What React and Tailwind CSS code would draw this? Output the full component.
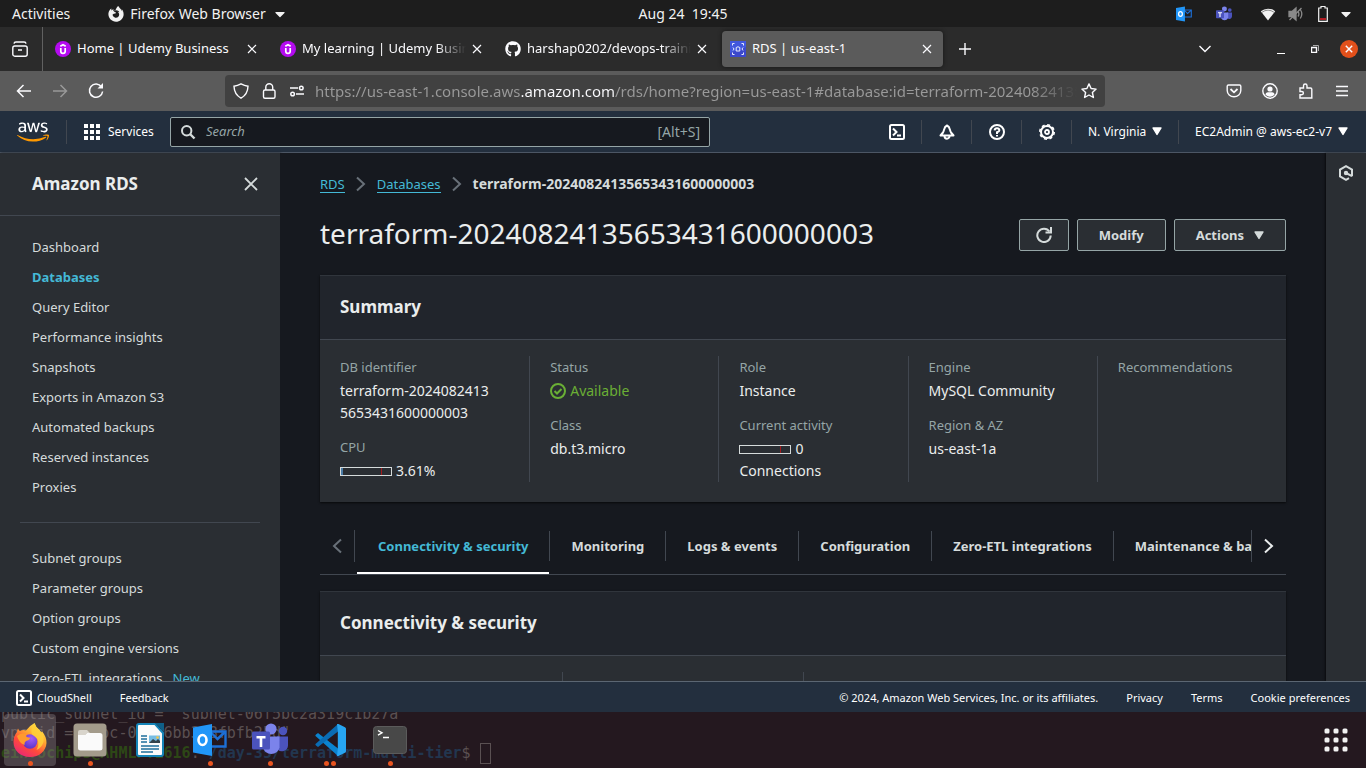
import React from "react";
import {
  FaAws,
  FaGithub,
  FaFirefoxBrowser,
  FaCaretDown,
} from "react-icons/fa";

function Stroke({ size = 16, w = 1.5, children, className = "", box = 16 }) {
  return (
    <svg
      width={size}
      height={size}
      viewBox={`0 0 ${box} ${box}`}
      fill="none"
      stroke="currentColor"
      strokeWidth={w}
      className={"shrink-0 " + className}
      aria-hidden="true"
    >
      {children}
    </svg>
  );
}

function Caret({ className = "" }) {
  return (
    <svg width="10" height="9" viewBox="0 0 10 9" className={"shrink-0 " + className} aria-hidden="true">
      <path d="M1 1h8L5 7.5Z" fill="currentColor" stroke="currentColor" strokeWidth="1.4" strokeLinejoin="round" />
    </svg>
  );
}

function CloudShellIcon() {
  return (
    <Stroke w={2}>
      <rect x="1" y="1" width="14" height="14" rx="1.5" />
      <path d="M4 4.5 7.5 8 4 11.5M8 11.5h4" />
    </Stroke>
  );
}

/* ---------- Desktop top bar ---------- */

function OutlookGlyph({ size }) {
  return (
    <svg width={size} height={size} viewBox="0 0 34 34" aria-hidden="true">
      <path d="M17 8.5h15.5v15H17" fill="none" stroke="#1d6fd6" strokeWidth="2.4" />
      <path d="M18 9.5l6.5 6.5 7.5-7" fill="none" stroke="#1d6fd6" strokeWidth="2.4" />
      <path d="M0 4.500 19 1v32L0 29.500Z" fill="#2196f8" />
      <ellipse cx="9.500" cy="17" rx="4" ry="5" fill="none" stroke="#fff" strokeWidth="2.600" />
    </svg>
  );
}

function TeamsGlyph({ size }) {
  return (
    <svg width={size} height={size} viewBox="0 0 36 36" aria-hidden="true">
      <circle cx="31" cy="9" r="4.200" fill="#4b53bc" />
      <path d="M25 14.500h11v9a6 6 0 0 1-11 3Z" fill="#4b53bc" />
      <circle cx="19" cy="7" r="5.600" fill="#7b83eb" />
      <path d="M11 14.500h16.500v11a8.500 8.500 0 0 1-16.500 0Z" fill="#7b83eb" />
      <rect x="0" y="9.500" width="18" height="18" rx="1.500" fill="#4b53bc" />
      <path d="M4.500 14h9v2.400h-3.200v8.600H7.700v-8.600H4.500Z" fill="#fff" />
    </svg>
  );
}

function SystemBar() {
  return (
    <header className="grid h-[27px] shrink-0 grid-cols-[1fr_auto_1fr] items-center bg-[#1d1d1d] text-sm text-[#f2f2f2]">
      <div className="flex items-center">
        <button className="ml-3">Activities</button>
        <button className="ml-[38px] flex items-center gap-1.5">
          <FaFirefoxBrowser size={16} />
          Firefox Web Browser
          <FaCaretDown size={16} />
        </button>
      </div>
      <time className="whitespace-pre">{"Aug 24  19:45"}</time>
      <div className="flex items-center justify-end pr-3">
        <OutlookGlyph size={16} />
        <span className="ml-6 flex">
          <TeamsGlyph size={16} />
        </span>
        <svg width="16" height="14" viewBox="0 0 16 14" className="ml-7" aria-hidden="true">
          <path d="M8 13.500 .8 4.200A11.500 11.500 0 0 1 15.200 4.200Z" fill="#f2f2f2" />
          <path d="M1.800 5.400A10.500 10.500 0 0 1 14.200 5.400" fill="none" stroke="#8d8d8d" strokeWidth="1" />
        </svg>
        <svg width="16" height="16" viewBox="0 0 16 16" className="ml-3" fill="none" stroke="#8a8a8a" strokeWidth="1.300" aria-hidden="true">
          <path d="M1 5.500h3l4-3.500v12l-4-3.500H1Z" fill="#8a8a8a" />
          <path d="M10 5.500q1.800 2.500 0 5M12.300 3.500q3 4.500 0 9M1.500 14 13.500 2" />
        </svg>
        <svg width="10" height="16" viewBox="0 0 10 16" className="ml-3.5" aria-hidden="true">
          <path d="M3 2V.5h4V2h2.300v13.300H.7V2Z" fill="none" stroke="#f2f2f2" strokeWidth="1.200" />
          <path d="M2 13h6" stroke="#e01b24" strokeWidth="1.500" />
        </svg>
        <FaCaretDown size={16} className="ml-2.5" />
      </div>
    </header>
  );
}

/* ---------- Browser chrome ---------- */

function UdemyIcon() {
  return (
    <svg width="16" height="16" viewBox="0 0 16 16" className="shrink-0" aria-hidden="true">
      <circle cx="8" cy="8" r="8" fill="#b40bf0" />
      <path d="M5.300 5.300 8 3.700l2.700 1.600M5.800 7v3.200a2.200 2.200 0 0 0 4.400 0V7" fill="none" stroke="#fff" strokeWidth="1.700" />
    </svg>
  );
}

function RdsIcon() {
  return (
    <svg width="16" height="16" viewBox="0 0 16 16" className="shrink-0" aria-hidden="true">
      <rect width="16" height="16" fill="#3b48cc" />
      <path d="M0 0h16v6L0 12Z" fill="#4663e8" opacity=".6" />
      <g fill="none" stroke="#e8ecff" strokeWidth="1">
        <path d="M2.500 4.500v-2h2M11.500 2.500h2v2M2.500 11.500v2h2M11.500 13.500h2v-2" />
        <path d="M6.200 6.500v3.500h3.600V6.500M6.200 6.500q1.800-1.500 3.600 0M3 6.500l1 1.500-1 1.500M13 6.500 12 8l1 1.500" />
      </g>
    </svg>
  );
}

function CloseX({ w = 1.2, size = 10 }) {
  return (
    <Stroke size={size} box={10} w={w}>
      <path d="M1 1l8 8M9 1l-8 8" />
    </Stroke>
  );
}

function BrowserTab({ icon, title, active, faded }) {
  return (
    <div
      className={
        "mx-0.5 flex h-9 w-[221px] items-center rounded pl-2 pr-[11px] " +
        (active ? "bg-[#5b5b5b] shadow-[0_0_4px_rgba(0,0,0,0.5)]" : "")
      }
    >
      {icon}
      <span
        className={
          "ml-1.5 min-w-0 flex-1 overflow-hidden whitespace-nowrap " +
          (faded ? "[mask-image:linear-gradient(to_right,#000_82%,transparent)]" : "")
        }
      >
        {title}
      </span>
      <button aria-label="Close tab" className="ml-1.5">
        <CloseX />
      </button>
    </div>
  );
}

function TabStrip() {
  return (
    <div className="flex h-11 shrink-0 items-center bg-[#2b2b2b] text-[13px] text-[#fbfbfe]">
      <button aria-label="Firefox View" className="flex h-full w-[43px] items-center border-r border-[#616161] pl-3">
        <Stroke w={1.4}>
          <rect x=".8" y="5" width="14.400" height="10.200" rx="2" />
          <path d="M2 2.700Q2.200 1 4 1h8q1.800 0 2 1.700M6 9h4" />
        </Stroke>
      </button>
      <div className="ml-0.5 flex">
        <BrowserTab icon={<UdemyIcon />} title="Home | Udemy Business" />
        <BrowserTab icon={<UdemyIcon />} title="My learning | Udemy Business" faded />
        <BrowserTab icon={<FaGithub size={16} className="shrink-0" />} title="harshap0202/devops-training" faded />
        <BrowserTab icon={<RdsIcon />} title="RDS | us-east-1" active />
      </div>
      <button aria-label="New tab" className="ml-3.5">
        <Stroke size={12} box={12} w={1.4}>
          <path d="M6 0v12M0 6h12" />
        </Stroke>
      </button>
      <div className="ml-auto flex items-center pr-2">
        <button aria-label="List all tabs">
          <Stroke size={12} box={12} w={1.4}>
            <path d="M.5 3 6 8.500 11.500 3" />
          </Stroke>
        </button>
        <button aria-label="Minimize" className="ml-[66px] h-2.5 w-2 border-b border-white pt-1" />
        <button aria-label="Restore" className="ml-[26px]">
          <Stroke size={8} box={8} w={1}>
            <path d="M.5 2.500h5v5h-5Z" strokeWidth="1.400" />
            <path d="M2 .5h5.500V6" stroke="#aaa" />
          </Stroke>
        </button>
        <button aria-label="Close window" className="ml-[21px] flex size-[18px] items-center justify-center rounded-full bg-[#e2501b]">
          <CloseX w={1.8} size={8} />
        </button>
      </div>
    </div>
  );
}

function UrlBar() {
  return (
    <div className="flex h-10 shrink-0 items-center bg-[#5b5b5b] px-4 text-[#fbfbfe]">
      <div className="flex w-[209px] items-center gap-5">
        <button aria-label="Back">
          <Stroke>
            <path d="M15 8H1.500M7.500 2l-6 6 6 6" />
          </Stroke>
        </button>
        <button aria-label="Forward" className="text-[#999]">
          <Stroke>
            <path d="M1 8h13.500M8.500 2l6 6-6 6" />
          </Stroke>
        </button>
        <button aria-label="Reload">
          <Stroke>
            <path d="M13.500 4A6.600 6.600 0 1 0 14.600 8.500" />
            <path d="M9.500 5.500H15V0Z" fill="currentColor" stroke="none" />
          </Stroke>
        </button>
      </div>
      <div className="flex h-8 min-w-0 max-w-[880px] flex-1 items-center gap-3 rounded bg-[#414141] px-2">
        <Stroke w={1.4}>
          <path d="M8 .8q3.500 1.900 7 2.400-.2 8-7 12Q1.200 11.200 1 3.200 4.500 2.700 8 .8Z" />
        </Stroke>
        <Stroke w={1.4}>
          <rect x="2.500" y="7" width="11.500" height="8.200" rx="1.500" />
          <path d="M4.800 7V4.200a3.400 3.400 0 0 1 6.900 0V7" />
        </Stroke>
        <Stroke w={1.5}>
          <path d="M1 5h8M7 11h8" />
          <circle cx="12.300" cy="5" r="1.800" />
          <circle cx="3.600" cy="11" r="1.800" />
        </Stroke>
        <input
          aria-label="Address"
          readOnly
          defaultValue="https://us-east-1.console.aws.amazon.com/rds/home?region=us-east-1#database:id=terraform-20240824135653431600000003"
          className="-ml-0.5 min-w-0 flex-1 bg-[linear-gradient(to_right,#9a9a9a_206px,#fbfbfe_206px,#fbfbfe_299px,#9a9a9a_299px,#9a9a9a_94%,#414141)] bg-clip-text text-[15px] text-transparent outline-none"
        />
        <Stroke w={1.4} className="-ml-2">
          <path d="m8 .9 2.100 4.600 5 .6-3.700 3.400 1 5L8 12l-4.400 2.500 1-5L.9 6.100l5-.6Z" strokeLinejoin="round" />
        </Stroke>
      </div>
      <div className="ml-auto flex items-center gap-5">
        <Stroke w={1.4}>
          <path d="M2.500 2h11q1.300 0 1.300 1.300V7.500a6.800 6.300 0 0 1-13.600 0V3.300Q1.200 2 2.500 2Z" />
          <path d="M4.500 6 8 9.300 11.500 6" strokeWidth="1.800" />
        </Stroke>
        <Stroke w={1.4}>
          <circle cx="8" cy="8" r="7.200" />
          <circle cx="8" cy="6" r="2.600" fill="currentColor" stroke="none" />
          <path d="M3.500 11.800q0-2.500 2.500-2.500h4q2.500 0 2.500 2.500Q8 15.500 3.500 11.800Z" fill="currentColor" stroke="none" />
        </Stroke>
        <Stroke w={1.400}>
          <path d="M2 5h3.500V2.700a1.700 1.700 0 0 1 3.500 0V5h3.500q1.300 0 1.300 1.300V15H2v-3.300h1.800a1.600 1.600 0 0 0 0-3.200H2Z" />
        </Stroke>
        <Stroke w={1.400}>
          <path d="M2 3.500h12M2 8h12M2 12.500h12" />
        </Stroke>
      </div>
    </div>
  );
}

/* ---------- AWS console ---------- */

function AwsLogo() {
  return (
    <a href="#home" aria-label="AWS home" className="flex">
      <svg width="0" height="0" aria-hidden="true">
        <linearGradient id="aws-fill" gradientUnits="userSpaceOnUse" x1="0" y1="0" x2="0" y2="512">
          <stop offset="0.570" stopColor="#fff" />
          <stop offset="0.570" stopColor="#f90" />
        </linearGradient>
      </svg>
      <FaAws size={32} style={{ fill: "url(#aws-fill)" }} />
    </a>
  );
}

function NavIcon({ label, children }) {
  return (
    <button aria-label={label} className="flex h-6 w-[50px] items-center justify-center border-r border-[#414750]">
      {children}
    </button>
  );
}

function ConsoleNav() {
  return (
    <nav className="flex h-[42px] shrink-0 items-center border-b border-[#4c5664] bg-[#232f3e] text-xs text-white">
      <div className="flex h-6 w-[67px] items-center border-r border-[#414750] pl-[17px]">
        <AwsLogo />
      </div>
      <button className="flex w-[103px] items-center gap-2 pl-[17px]">
        <svg width="16" height="16" viewBox="0 0 16 16" fill="#fff" aria-hidden="true">
          {[0, 6, 12].map((y) => [0, 6, 12].map((x) => <rect key={x + "-" + y} x={x} y={y} width="4" height="4" />))}
        </svg>
        Services
      </button>
      <label className="flex h-[30px] w-[540px] items-center rounded-xs border border-[#95a5a6] bg-[#16191f] px-[9px] text-[#d5dbdb]">
        <Stroke w={2}>
          <circle cx="6.700" cy="6.700" r="4.700" />
          <path d="m10 10 4.500 4.500" strokeWidth="2.400" />
        </Stroke>
        <input type="search" aria-label="Search" placeholder="Search" className="mx-2.5 min-w-0 flex-1 bg-transparent text-[13px] outline-none placeholder:italic placeholder:text-[#95a5a6]" />
        <span className="text-sm text-[#95a5a6]">[Alt+S]</span>
      </label>
      <div className="ml-auto flex items-center">
        <NavIcon label="CloudShell">
          <CloudShellIcon />
        </NavIcon>
        <NavIcon label="Notifications">
          <Stroke w={2}>
            <path d="M8 1.500C4.500 3 5.500 6.500 4 8.500L1.500 11.500h13L12 8.500C10.500 6.500 11.500 3 8 1.500Z" strokeLinejoin="round" />
            <path d="M5.500 12a2.500 2.700 0 0 0 5 0" />
          </Stroke>
        </NavIcon>
        <NavIcon label="Support">
          <Stroke w={2}>
            <circle cx="8" cy="8" r="7" />
            <path d="M5.600 6.300q.2-2 2.400-2t2.400 2Q10.400 7.500 8 8.200V10M8 11v1.500" />
          </Stroke>
        </NavIcon>
        <NavIcon label="Settings">
          <Stroke w={2}>
            <circle cx="8" cy="8" r="6" />
            <circle cx="8" cy="8" r="7.200" strokeWidth="1.600" strokeDasharray="3 2.650" />
            <circle cx="8" cy="8" r="2" strokeWidth="1.800" />
          </Stroke>
        </NavIcon>
        <button className="flex h-6 w-[107px] items-center justify-center gap-1.5 border-r border-[#414750]">
          N. Virginia <Caret />
        </button>
        <button className="flex h-6 items-center gap-1.5 pl-4 pr-[18px]">
          EC2Admin @ aws-ec2-v7 <Caret />
        </button>
      </div>
    </nav>
  );
}

const primaryLinks = [
  "Dashboard",
  "Databases",
  "Query Editor",
  "Performance insights",
  "Snapshots",
  "Exports in Amazon S3",
  "Automated backups",
  "Reserved instances",
  "Proxies",
];
const secondaryLinks = ["Subnet groups", "Parameter groups", "Option groups", "Custom engine versions", "Zero-ETL integrations"];

function SideLink({ label, active, badge }) {
  return (
    <li className="flex h-[30px] items-center gap-2.5 pl-8 pt-0.5">
      <a href="#nav" className={active ? "font-bold text-[#44b9d6]" : ""}>
        {label}
      </a>
      {badge && <span className="text-[#44b9d6]">{badge}</span>}
    </li>
  );
}

function Sidebar() {
  return (
    <aside className="w-[280px] shrink-0 overflow-hidden bg-[#2a2e33] text-[13px] text-[#d5dbdb] shadow-[1px_0_2px_rgba(0,0,0,0.6)]">
      <div className="flex h-[63px] items-center justify-between border-b border-[#414750] pl-8 pr-[22px]">
        <h2 className="text-[17px] font-bold text-[#eaeded]">Amazon RDS</h2>
        <button aria-label="Close navigation">
          <Stroke size={14} box={14} w={1.8}>
            <path d="M1 1l12 12M13 1 1 13" />
          </Stroke>
        </button>
      </div>
      <ul className="pt-4">
        {primaryLinks.map((l) => (
          <SideLink key={l} label={l} active={l === "Databases"} />
        ))}
      </ul>
      <hr className="mx-5 my-5 border-[#414750]" />
      <ul>
        {secondaryLinks.map((l) => (
          <SideLink key={l} label={l} badge={l === "Zero-ETL integrations" ? "New" : null} />
        ))}
      </ul>
    </aside>
  );
}

function Chevron({ flip, className = "" }) {
  return (
    <svg width="10" height="16" viewBox="0 0 10 16" fill="none" stroke="currentColor" strokeWidth="2" className={"shrink-0 " + className} aria-hidden="true">
      <path d={flip ? "M9 1.500 2 8l7 6.500" : "M1 1.500 8 8l-7 6.500"} />
    </svg>
  );
}

function Field({ label, children }) {
  return (
    <div>
      <dt className="mb-0.5 text-[#95a5a6]">{label}</dt>
      <dd className="text-sm leading-[22px]">{children}</dd>
    </div>
  );
}

function Meter({ filled }) {
  return (
    <span className="mr-1 inline-flex h-[9px] w-[52px] justify-between border border-[#d5dbdb] pr-[9px] align-[1px]">
      <span className={filled ? "w-0.5 bg-[#4a7ba6]" : "w-0"} />
      <span className="w-px bg-[#a3191c]" />
    </span>
  );
}

function Panel({ title, children, className = "" }) {
  return (
    <section className={"border-t border-[#30353c] bg-[#2a2e33] shadow-[0_1px_2px_rgba(0,0,0,0.7)] " + className}>
      <div className="flex h-16 items-center border-b border-[#414750] bg-[#21252c] px-5 pb-0.5">
        <h2 className="text-[17px] font-bold text-[#eaeded]">{title}</h2>
      </div>
      {children}
    </section>
  );
}

const col = "flex flex-col gap-3 border-l border-[#414750] pl-5";
const tabs = ["Connectivity & security", "Monitoring", "Logs & events", "Configuration", "Zero-ETL integrations", "Maintenance & backups"];
const btn = "flex h-8 items-center justify-center rounded-xs border border-[#95a5a6] bg-[#2a2e33] font-bold text-[#d5dbdb]";

function Detail() {
  return (
    <main className="min-w-0 flex-1 overflow-hidden bg-[#16191f] px-10 pt-5 text-[13px] leading-[22px] text-[#eaeded]">
      <nav aria-label="Breadcrumb" className="flex items-center gap-[11px]">
        <a href="#rds" className="border-b border-[#44b9d6] leading-4 text-[#44b9d6]">RDS</a>
        <Chevron className="text-[#687078]" />
        <a href="#databases" className="border-b border-[#44b9d6] leading-4 text-[#44b9d6]">Databases</a>
        <Chevron className="text-[#687078]" />
        <span className="text-sm font-bold leading-[22px] text-[#d5dbdb]">terraform-20240824135653431600000003</span>
      </nav>
      <div className="mb-5 mt-4 flex h-11 items-center">
        <h1 className="flex-1 text-[28px]">terraform-20240824135653431600000003</h1>
        <div className="flex gap-2 self-end pb-1">
          <button aria-label="Refresh" className={btn + " w-[50px]"}>
            <Stroke w={2}>
              <path d="M13.500 4.500A6.700 6.700 0 1 0 14.700 8.500" />
              <path d="M15 0v5.500H9.500" />
            </Stroke>
          </button>
          <button className={btn + " px-[21px]"}>Modify</button>
          <button className={btn + " gap-2.5 px-[21px]"}>
            Actions <Caret />
          </button>
        </div>
      </div>

      <Panel title="Summary">
        <dl className="grid grid-cols-5 pb-5 pl-5 pt-4">
          <div className="flex flex-col gap-3 pr-5">
            <Field label="DB identifier">
              <span className="block">terraform-2024082413</span>
              <span className="block">5653431600000003</span>
            </Field>
            <Field label="CPU">
              <Meter filled />
              3.61%
            </Field>
          </div>
          <div className={col}>
            <Field label="Status">
              <span className="flex items-center gap-1 text-[#6aaf35]">
                <Stroke w={2}>
                  <circle cx="8" cy="8" r="7" />
                  <path d="m4.500 8 2.500 2.500L11.500 6" />
                </Stroke>
                Available
              </span>
            </Field>
            <Field label="Class">db.t3.micro</Field>
          </div>
          <div className={col}>
            <Field label="Role">Instance</Field>
            <Field label="Current activity">
              <span className="block">
                <Meter />0
              </span>
              <span className="block">Connections</span>
            </Field>
          </div>
          <div className={col}>
            <Field label="Engine">MySQL Community</Field>
            <Field label="Region & AZ">us-east-1a</Field>
          </div>
          <div className={col}>
            <Field label="Recommendations" />
          </div>
        </dl>
      </Panel>

      <div className="mb-4 mt-4 flex h-[57px] items-center border-b border-[#414750]">
        <button aria-label="Previous tabs" className="flex h-8 w-[35px] shrink-0 items-center border-r border-[#414750] pl-3 text-[#687078]">
          <Chevron flip />
        </button>
        <div role="tablist" className="ml-0.5 flex min-w-0 flex-1 self-stretch overflow-hidden">
          {tabs.map((t, i) => (
            <button
              key={t}
              role="tab"
              aria-selected={i === 0}
              className={
                "flex shrink-0 items-center whitespace-nowrap border-b-2 pt-0.5 font-bold " +
                (i === 0 ? "border-white text-[#44b9d6]" : "border-transparent text-[#d5dbdb]")
              }
            >
              <span className={"px-[21px] py-1 " + (i === 0 ? "" : "border-l border-[#414750]")}>{t}</span>
            </button>
          ))}
        </div>
        <button aria-label="Next tabs" className="flex h-8 w-[35px] shrink-0 items-center justify-center border-l border-[#414750] text-[#eaeded]">
          <Chevron />
        </button>
      </div>

      <Panel title="Connectivity & security">
        <div className="grid h-40 grid-cols-4 pt-4">
          <div />
          <div className="border-l border-[#414750]" />
          <div className="border-l border-[#414750]" />
          <div />
        </div>
      </Panel>
    </main>
  );
}

function ConsoleFooter() {
  return (
    <footer className="flex h-[31px] shrink-0 items-center border-t border-[#5b6672] bg-[#232f3e] px-4 pt-0.5 text-[11px] text-white">
      <button className="flex items-center gap-[5px]">
        <CloudShellIcon />
        CloudShell
      </button>
      <button className="ml-7">Feedback</button>
      <div className="ml-auto flex gap-7">
        <span>© 2024, Amazon Web Services, Inc. or its affiliates.</span>
        <a href="#privacy">Privacy</a>
        <a href="#terms">Terms</a>
        <button>Cookie preferences</button>
      </div>
    </footer>
  );
}

/* ---------- Dock ---------- */

function FirefoxGlyph() {
  return (
    <svg width="34" height="34" viewBox="0 0 34 34" aria-hidden="true">
      <defs>
        <linearGradient id="ff-body" x1=".8" y1="0" x2=".2" y2="1">
          <stop offset="0" stopColor="#fff44f" />
          <stop offset=".35" stopColor="#ffa930" />
          <stop offset=".65" stopColor="#ff4b3a" />
          <stop offset="1" stopColor="#e8247a" />
        </linearGradient>
        <radialGradient id="ff-core" cx=".6" cy=".3" r=".7">
          <stop offset="0" stopColor="#a45cf5" />
          <stop offset="1" stopColor="#5a35c8" />
        </radialGradient>
      </defs>
      <path d="M21.500 0q1 4 5 7 1 1 1.500 2.500l1.200-1q4.500 5.500 4.300 11.500C33 28 26.500 34 17 34S.5 27.500.5 19Q.5 13 4 9q0-2 1-3.500Q6 7.500 7 8q3-1.500 6-.5 3-4.500 8.500-7.500Z" fill="url(#ff-body)" />
      <circle cx="17" cy="18.500" r="7.300" fill="url(#ff-core)" />
      <path d="M4 13q5-4 10-1.500-1.500 1-.5 2.500 2 .5 4 .8-1 2.700-4.500 3.200-2 1.500-1.500 4Q6 20 4 13Z" fill="#ff9a2e" />
      <path d="M21.500 0q1 4 5 7 5 5 4 12-2 6-7 8 3-5 1-11-3-3-5.500-4.500-2-5 2.500-11.500Z" fill="#ffcf3a" opacity=".85" />
    </svg>
  );
}

function FilesGlyph() {
  return (
    <svg width="34" height="34" viewBox="0 0 34 34" aria-hidden="true">
      <rect x=".5" y=".5" width="33" height="33" rx="3.500" fill="#a39b8b" />
      <path d="M5 9q0-2 2-2h7l3 3h-3l-2 2H5Z" fill="#d9d5cc" />
      <path d="M5 12h7l2-2h13q2.500 0 2.500 2.500v13q0 2-2.500 2H7.500q-2.500 0-2.500-2Z" fill="#fafafa" />
    </svg>
  );
}

function WriterGlyph() {
  return (
    <svg width="30" height="34" viewBox="0 0 30 34" aria-hidden="true">
      <path d="M4 1h16l8 9v21q0 2-2 2H4q-2 0-2-2V3q0-2 2-2Z" fill="#fbfbfb" stroke="#1584b8" strokeWidth="2" />
      <path d="M20 0h9v9Z" fill="#0f5f87" />
      <path d="M6 13h6M6 16h6M6 19h6M6 23h18M6 26h18M6 29h12" stroke="#1f6f9c" strokeWidth="1.400" />
      <rect x="14" y="12.500" width="11" height="7.500" fill="#77bde4" />
      <path d="m14 20 4-4 3 2 2-2 2 2v2Z" fill="#33434d" />
      <circle cx="22.500" cy="14.500" r="1.300" fill="#f6c544" />
    </svg>
  );
}

function CodeGlyph() {
  return (
    <svg width="32" height="32" viewBox="0 0 32 32" aria-hidden="true">
      <path d="M2 10.500 4 9l20 15.500V32L1.500 12Q1 11.200 2 10.500Z" fill="#0b83cf" />
      <path d="M2 21.500 4 23 24 7.500V0L1.500 20Q1 20.800 2 21.500Z" fill="#0a6cb4" />
      <path d="M23 0q.7-.3 1.500 0L31 3.200q1 .5 1 1.500v22.600q0 1-1 1.500L24.500 32q-.8.300-1.500 0l.800-7.500v-17Z" fill="#27a5f2" />
    </svg>
  );
}

function TerminalGlyph() {
  return (
    <svg width="34" height="28" viewBox="0 0 34 28" fill="none" aria-hidden="true">
      <rect x=".5" y=".5" width="33" height="27" rx="3" fill="#484848" stroke="#5b5b5b" />
      <path d="m5 4.500 4 2.300-4 2.300M10 11.500h6" stroke="#fff" strokeWidth="1.400" />
    </svg>
  );
}

const dockApps = [
  { name: "Firefox", icon: <FirefoxGlyph />, dots: [1], active: true },
  { name: "Files", icon: <FilesGlyph />, dots: [1] },
  { name: "LibreOffice Writer", icon: <WriterGlyph />, dots: [] },
  { name: "Outlook", icon: <OutlookGlyph size={34} />, dots: [1] },
  { name: "Teams", icon: <TeamsGlyph size={36} />, dots: [1] },
  { name: "Visual Studio Code", icon: <CodeGlyph />, dots: [1, 2] },
  { name: "Terminal", icon: <TerminalGlyph />, dots: [1] },
];

function Dock() {
  return (
    <div className="relative h-14 shrink-0 overflow-hidden bg-[#24181f]">
      <pre className="absolute bottom-1 left-px font-['DejaVu_Sans_Mono',monospace] text-[15px] leading-[19px] text-[#5a5052]">
        {'public_subnet_id = "subnet-06f5bc2a319c1b27a"\nvpc_id = "vpc-0a1c6bb3e8fbfb25d"\n'}
        <b className="text-[#2d4716]">einfochips@AHMLPT1616</b>:<b className="text-[#22364f]">~/day-35/terraform-multi-tier</b>${" "}
        <span className="inline-block h-[21px] w-[11px] border border-[#5a5052] align-[-6px]" />
      </pre>
      <div className="relative flex h-full items-center pl-1">
        {dockApps.map((a) => (
          <button
            key={a.name}
            aria-label={a.name}
            className={"relative mr-2 flex h-[52px] w-[52px] items-center justify-center rounded " + (a.active ? "bg-[#8a8187]/40" : "")}
          >
            {a.icon}
            <span className="absolute inset-x-0 bottom-0 flex justify-center gap-0.5">
              {a.dots.map((d) => (
                <span key={d} className="size-[5px] rounded-full bg-[#e95420]" />
              ))}
            </span>
          </button>
        ))}
        <button aria-label="Show applications" className="ml-auto mr-[18px]">
          <svg width="24" height="24" viewBox="0 0 24 24" fill="#f2f2f2" aria-hidden="true">
            {[0, 9, 18].map((y) => [0, 9, 18].map((x) => <rect key={x + "-" + y} x={x + 0.5} y={y + 0.5} width="5" height="5" rx="1.500" />))}
          </svg>
        </button>
      </div>
    </div>
  );
}

export default function App() {
  return (
    <div className="flex h-screen w-full flex-col overflow-hidden bg-[#16191f] font-['Noto_Sans',sans-serif]">
      <SystemBar />
      <TabStrip />
      <UrlBar />
      <ConsoleNav />
      <div className="flex min-h-0 flex-1">
        <Sidebar />
        <Detail />
        <aside className="flex w-10 shrink-0 justify-center bg-[#2a2e33] pt-3 text-[#d5dbdb] shadow-[-1px_0_2px_rgba(0,0,0,0.6)]">
          <button aria-label="Open tools" className="self-start">
            <Stroke w={2}>
              <path d="M14 11.200V4.600L8 1.200 2 4.600v6.800l6 3.400 3-1.700" />
              <path d="m8 8 6 3.200" />
              <circle cx="8" cy="8" r="1.200" fill="currentColor" />
            </Stroke>
          </button>
        </aside>
      </div>
      <ConsoleFooter />
      <Dock />
    </div>
  );
}
